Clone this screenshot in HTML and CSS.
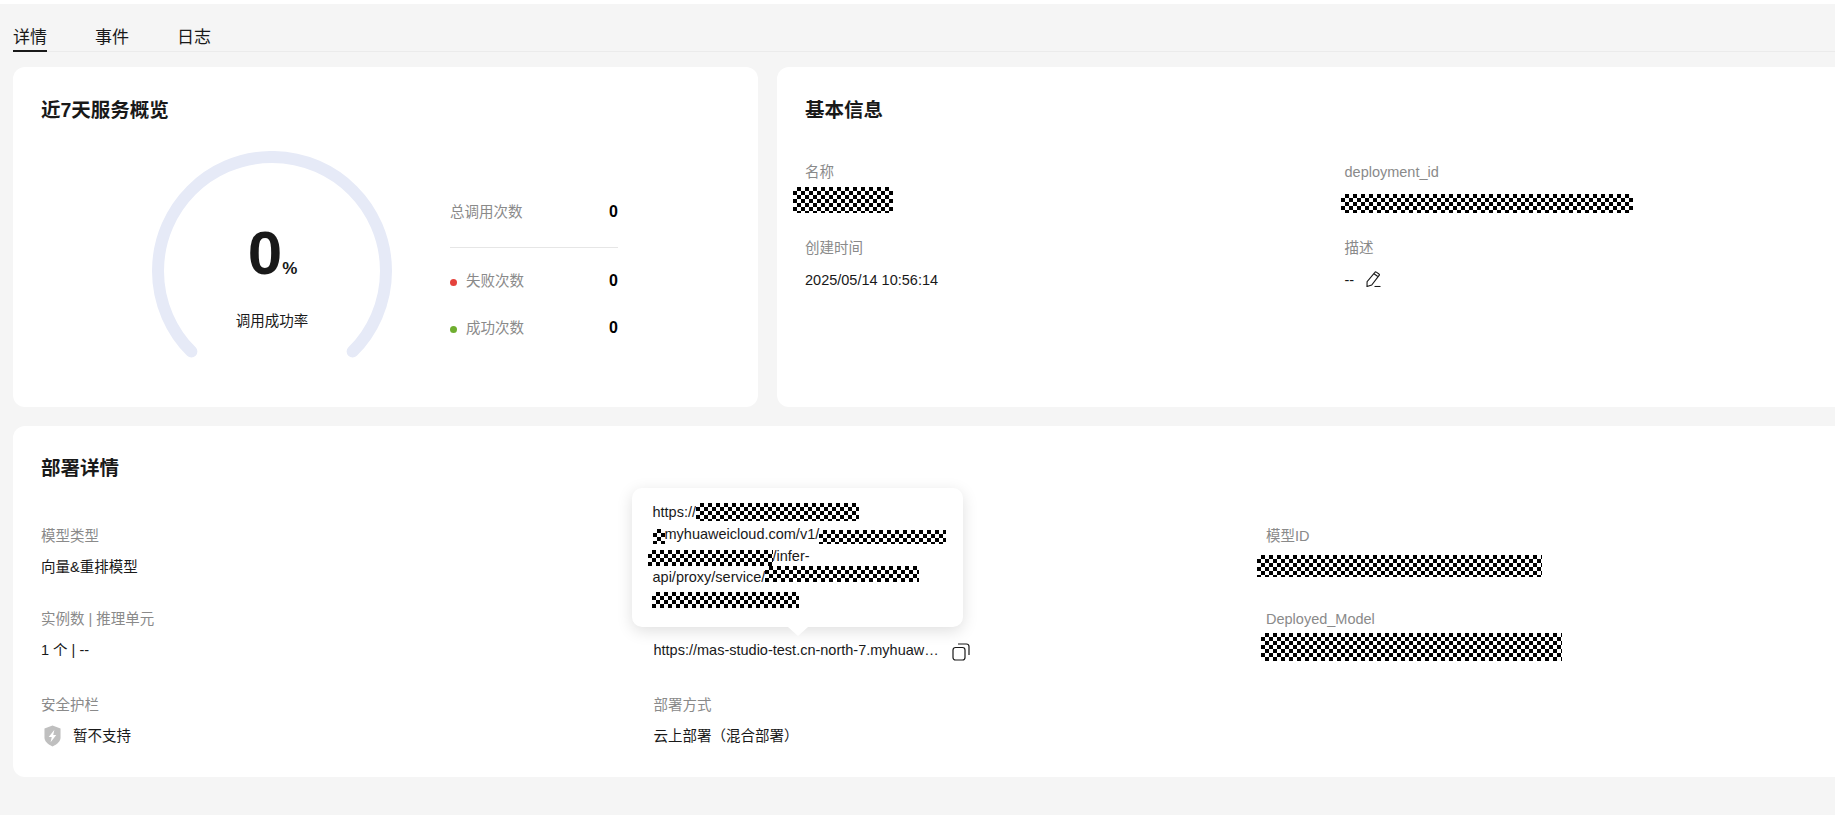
FILE: index.html
```html
<!DOCTYPE html>
<html lang="zh-CN">
<head>
<meta charset="utf-8">
<title>部署详情</title>
<link rel="stylesheet" href="styles.css">
</head>
<body>
<div class="topstrip"></div>
<main class="page">
  <nav class="tabs">
    <a class="tab active">详情</a>
    <a class="tab">事件</a>
    <a class="tab">日志</a>
  </nav>
  <div class="top-row">
    <section class="card overview">
      <h2 class="card-title">近7天服务概览</h2>
      <div class="overview-body">
        <div class="gauge">
          <svg class="gauge-arc" width="240" height="210" viewBox="0 0 240 210"><path d="M39.4 200.6A114 114 0 1 1 200.6 200.6" fill="none" stroke="#e6eaf7" stroke-width="12" stroke-linecap="round"/></svg>
          <div class="gauge-text">
            <div class="gauge-value"><span class="gauge-num">0</span><span class="gauge-unit">%</span></div>
            <div class="gauge-label">调用成功率</div>
          </div>
        </div>
        <div class="stats">
          <div class="stat"><span class="stat-label">总调用次数</span><span class="stat-num">0</span></div>
          <div class="stat-divider"></div>
          <div class="stat fail"><span class="stat-label"><i class="dot red"></i>失败次数</span><span class="stat-num">0</span></div>
          <div class="stat ok"><span class="stat-label"><i class="dot green"></i>成功次数</span><span class="stat-num">0</span></div>
        </div>
      </div>
    </section>
    <section class="card basic">
      <h2 class="card-title">基本信息</h2>
      <div class="basic-grid">
        <div class="item"><div class="label">名称</div><div class="value"><span class="redact r-name"></span></div></div>
        <div class="item"><div class="label">deployment_id</div><div class="value"><span class="redact r-depid"></span></div></div>
        <div class="item"><div class="label">创建时间</div><div class="value">2025/05/14 10:56:14</div></div>
        <div class="item"><div class="label">描述</div><div class="value desc">--
          <svg class="pencil" width="16" height="16" viewBox="0 0 16 16" fill="none" stroke="#191919" stroke-width="1.100"><path d="M11.300 1.100l2.700 1.900c.5.300.5.800.3 1.200L6.700 14l-4.700 1.500.1-4.800L9.900 1.300c.3-.4.900-.5 1.400-.2z"/><path d="M9 2.800l3.800 2.700"/><path d="M9.500 15.500H15.500"/></svg>
        </div></div>
      </div>
    </section>
  </div>
  <section class="card deploy">
    <h2 class="card-title">部署详情</h2>
    <div class="deploy-grid">
      <div class="item"><div class="label">模型类型</div><div class="value">向量&amp;重排模型</div></div>
      <div class="item"></div>
      <div class="item"><div class="label">模型ID</div><div class="value"><span class="redact r-modelid"></span></div></div>
      <div class="item"><div class="label">实例数 | 推理单元</div><div class="value">1 个 | --</div></div>
      <div class="item endpoint">
        <div class="tooltip">
          <div class="tip-line">https://<span class="redact r-t1"></span></div>
          <div class="tip-line"><span class="redact r-t2a"></span>myhuaweicloud.com/v1/<span class="redact r-t2b"></span></div>
          <div class="tip-line"><span class="redact r-t3"></span>/infer-</div>
          <div class="tip-line">api/proxy/service/<span class="redact r-t4"></span></div>
          <div class="tip-line"><span class="redact r-t5"></span></div>
        </div>
        <div class="label hidden-label">&nbsp;</div>
        <div class="value url-row"><span class="url">https://mas-studio-test.cn-north-7.myhuaweicloud.com/v1/infer-api/proxy/service</span>
          <svg class="copy" width="18" height="18" viewBox="0 0 18 18" fill="none" stroke="#191919" stroke-width="1.200"><rect x="1" y="4.500" width="12" height="12.500" rx="2.500"/><path d="M6 1h8.500A2.500 2.500 0 0 1 17 3.500V12"/></svg>
        </div>
      </div>
      <div class="item"><div class="label">Deployed_Model</div><div class="value"><span class="redact r-depmodel"></span></div></div>
      <div class="item"><div class="label">安全护栏</div><div class="value guard">
        <svg class="shield" width="17" height="22" viewBox="0 0 18 22"><path d="M9 0l8.500 3v9.500c0 4-3.500 7.200-8.500 9.500-5-2.300-8.500-5.500-8.500-9.500V3z" fill="#bfbfbf"/><path d="M11 4.500L5 12h3.200l-1.200 5.500 6-7.500H9.800z" fill="#fff"/></svg>暂不支持</div></div>
      <div class="item"><div class="label">部署方式</div><div class="value">云上部署（混合部署）</div></div>
      <div class="item"></div>
    </div>
  </section>
</main>
</body>
</html>
```
FILE: styles.css
```css
* { box-sizing: border-box; }
html, body { margin: 0; height: 815px; overflow: hidden; }
body {
  background: #f5f5f5;
  color: #191919;
  font-family: "Liberation Sans", "Noto Sans CJK SC", sans-serif;
  font-size: 14.500px;
  line-height: 20px;
}
.topstrip { height: 4px; background: #fff; }
.page { width: 1910px; padding-left: 13px; }

.tabs {
  display: flex;
  gap: 48px;
  height: 48px;
  padding-top: 22px;
  border-bottom: 1px solid #ebebeb;
}
.tab {
  font-size: 17px;
  line-height: 23px;
  height: 26px;
  color: #191919;
}
.tab.active { border-bottom: 2px solid #191919; }

.top-row {
  display: grid;
  grid-template-columns: 745px 1133px;
  gap: 19px;
  margin-top: 15px;
}
.card { background: #fff; border-radius: 12px; padding: 29px 28px 0; }
.card-title { margin: 0; font-size: 19.500px; line-height: 28px; font-weight: 700; color: #191919; }
.overview, .basic { height: 340px; }

.overview-body { display: flex; gap: 58px; margin: 27px 0 0 111px; }
.gauge { position: relative; width: 240px; height: 210px; }
.gauge-arc { display: block; }
.gauge-text { position: absolute; left: 0; right: 0; top: 72px; text-align: center; }
.gauge-value { height: 60px; line-height: 60px; white-space: nowrap; font-weight: 700; padding-left: 1px; }
.gauge-num { font-size: 62px; }
.gauge-unit { font-size: 17px; }
.gauge-label { margin-top: 28px; }

.stats { width: 168px; margin-top: 51px; }
.stat { display: flex; justify-content: space-between; align-items: center; height: 20px; }
.stat-label { display: flex; align-items: center; color: #8a8a8a; }
.stat-num { font-size: 16px; font-weight: 700; color: #000; }
.stat-divider { height: 1px; margin: 25px 0 23px; background: #e6e6e6; }
.stat.ok { margin-top: 27px; }
.dot { width: 7px; height: 7px; border-radius: 50%; margin-right: 9px; margin-top: 2px; }
.dot.red { background: #e5423c; }
.dot.green { background: #6fae2f; }

.label { height: 20px; color: #8a8a8a; white-space: nowrap; }
.value { height: 20px; margin-top: 12px; color: #191919; white-space: nowrap; }

.basic-grid {
  display: grid;
  grid-template-columns: 539.500px 538.500px;
  grid-template-rows: 76px auto;
  margin-top: 38px;
}
.desc { display: flex; align-items: center; gap: 11px; }
.pencil { flex: none; margin-top: -3px; }

.deploy { height: 351px; margin-top: 19px; width: 1897px; padding-top: 28px; }
.deploy-grid {
  display: grid;
  grid-template-columns: repeat(3, 612.500px);
  grid-template-rows: 83px 86px auto;
  margin-top: 44px;
}
.deploy-grid .value { margin-top: 11px; }
.endpoint { position: relative; }
.url-row { display: flex; align-items: center; gap: 6px; }
.url { display: block; width: 292px; overflow: hidden; text-overflow: ellipsis; white-space: nowrap; }
.copy { flex: none; margin-top: 4px; }
.guard { display: flex; align-items: center; gap: 12px; padding-left: 3px; }
.shield { flex: none; }

.tooltip {
  position: absolute;
  left: -22px;
  bottom: 68px;
  width: 331px;
  height: 139px;
  padding: 14px 21px;
  background: #fff;
  border-radius: 10px;
  box-shadow: 0 4px 16px rgba(0, 0, 0, 0.13);
  color: #191919;
  z-index: 2;
  line-height: 21.750px;
}
.tooltip::after {
  content: "";
  position: absolute;
  left: 156px;
  bottom: -9px;
  border-left: 10px solid transparent;
  border-right: 10px solid transparent;
  border-top: 9px solid #fff;
}
.tip-line { height: 21.750px; white-space: nowrap; }

.redact {
  display: inline-block;
  vertical-align: top;
  background: conic-gradient(#000 25%, #fff 0 50%, #000 0 75%, #fff 0) 0 0 / 8px 8px;
}
.value .redact { display: block; }
.r-name { width: 100px; height: 26px; margin: -7px 0 0 -12px; }
.r-depid { width: 292px; height: 19px; margin-left: -4px; }
.r-modelid { width: 285px; height: 22px; margin: -2px 0 0 -9px; }
.r-depmodel { width: 301px; height: 28px; margin: -7px 0 0 -5px; }
.r-t1 { width: 163px; height: 18px; margin-top: 1px; }
.r-t2a { width: 12px; height: 15px; margin-top: 5px; }
.r-t2b { width: 127px; height: 14px; margin-top: 6px; }
.r-t3 { width: 125px; height: 16px; margin: 4px 0 0 -5px; }
.r-t4 { width: 154px; height: 16px; margin-top: -1px; }
.r-t5 { width: 147px; height: 16px; margin: 3px 0 0 -1px; }
```
